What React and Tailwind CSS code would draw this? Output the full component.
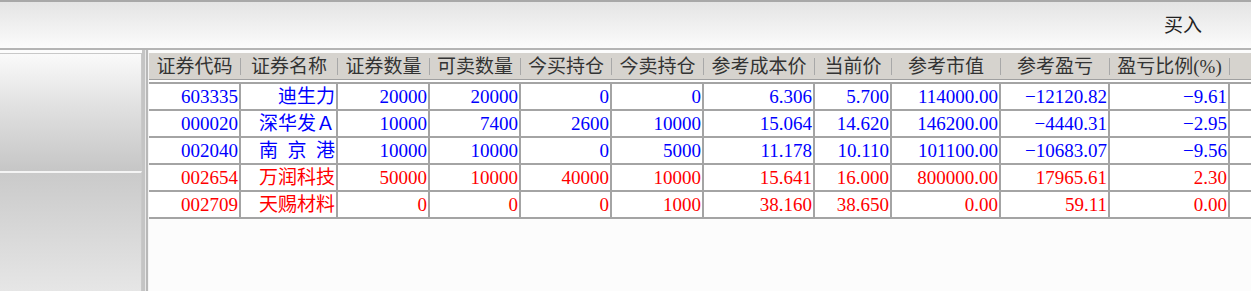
const FONT = '"Liberation Serif", "Noto Sans CJK SC", serif';

const columns = [
  { title: "证券代码", w: 92 },
  { title: "证券名称", w: 97 },
  { title: "证券数量", w: 92 },
  { title: "可卖数量", w: 91 },
  { title: "今买持仓", w: 91 },
  { title: "今卖持仓", w: 92 },
  { title: "参考成本价", w: 111 },
  { title: "当前价", w: 77 },
  { title: "参考市值", w: 109 },
  { title: "参考盈亏", w: 109 },
  { title: "盈亏比例(%)", w: 120 },
];

const rows = [
  { red: false, cells: ["603335", "迪生力", "20000", "20000", "0", "0", "6.306", "5.700", "114000.00", "−12120.82", "−9.61"] },
  { red: false, cells: ["000020", "深华发Ａ", "10000", "7400", "2600", "10000", "15.064", "14.620", "146200.00", "−4440.31", "−2.95"] },
  { red: false, cells: ["002040", "南\u2002京\u2002港", "10000", "10000", "0", "5000", "11.178", "10.110", "101100.00", "−10683.07", "−9.56"] },
  { red: true, cells: ["002654", "万润科技", "50000", "10000", "40000", "10000", "15.641", "16.000", "800000.00", "17965.61", "2.30"] },
  { red: true, cells: ["002709", "天赐材料", "0", "0", "0", "1000", "38.160", "38.650", "0.00", "59.11", "0.00"] },
];

function HeaderRow() {
  return (
    <div className="flex h-[27px] bg-[#d6d3ce] border-b border-[#a0a0a0] text-[#333]">
      {columns.map((c) => (
        <div key={c.title} className="flex shrink-0 items-center" style={{ width: c.w }}>
          <span className="flex-1 text-center leading-none">{c.title}</span>
          <span className="h-[17px] w-px bg-[#a8a8a8]" />
        </div>
      ))}
      <div className="flex-1" />
    </div>
  );
}

function DataRow({ row }) {
  return (
    <div className={`flex h-[27px] border-b-2 border-[#a4a4a4] bg-white ${row.red ? "text-[#ff0000]" : "text-[#0000ff]"}`}>
      {row.cells.map((v, i) => (
        <div
          key={i}
          className="flex shrink-0 items-center justify-end border-r-2 border-[#a4a4a4] pr-[1px] leading-none whitespace-pre"
          style={{ width: columns[i].w }}
        >
          {v}
        </div>
      ))}
      <div className="flex-1" />
    </div>
  );
}

export default function App() {
  return (
    <div className="flex h-[291px] w-[1251px] flex-col overflow-hidden bg-[#fcfcfc] text-[19px]" style={{ fontFamily: FONT }}>
      <div className="flex h-[50px] shrink-0 items-center justify-end border-t-2 border-b-2 border-t-[#a8a8a8] border-b-[#b4b4b4] bg-gradient-to-b from-[#e4e4e4] to-[#fbfbfb] pr-[49px]">
        <span className="text-[#222] leading-none">买入</span>
      </div>
      <div className="flex flex-1">
        <div className="flex w-[142px] shrink-0 flex-col pt-[3px]">
          <div className="h-[118px] border-t border-r border-[#c8c8c8] bg-gradient-to-b from-[#fafafa] via-[#dedede] to-[#c6c6c6]" />
          <div className="flex-1 border-t-2 border-r border-t-[#f4f4f4] border-r-[#c8c8c8] bg-gradient-to-b from-[#cacaca] to-[#e6e6e6]" />
        </div>
        <div className="flex w-[7px] shrink-0">
          <div className="w-[3px] bg-[#c4c4c4]" />
          <div className="w-[1px] bg-[#e8e8e8]" />
          <div className="w-[2px] bg-[#b8b8b8]" />
          <div className="w-[1px] bg-[#f4f4f4]" />
        </div>
        <div className="flex flex-1 flex-col pt-[3px]">
          <HeaderRow />
          <div className="h-[2px] border-b-2 border-[#a4a4a4] bg-white box-content" />
          {rows.map((r) => (
            <DataRow key={r.cells[0]} row={r} />
          ))}
        </div>
      </div>
    </div>
  );
}
